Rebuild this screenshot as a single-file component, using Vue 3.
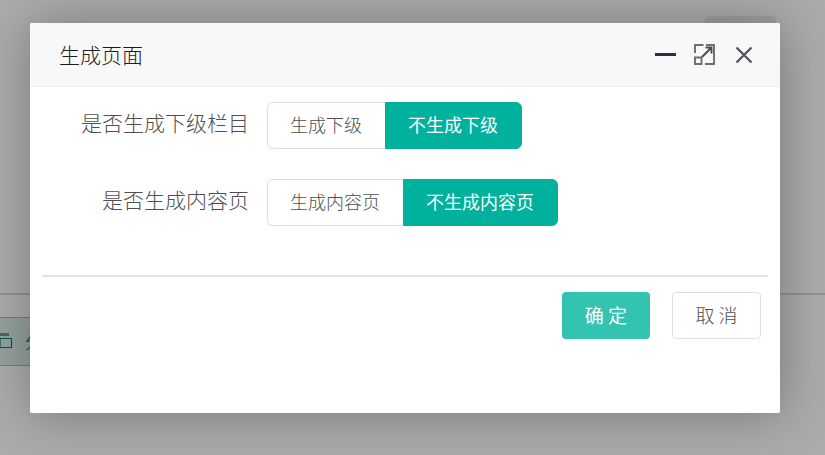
<template>
  <div class="page">
    <div class="back">
      <span class="back-btn"></span>
      <div class="back-rule"></div>
      <div class="back-tag">
        <svg width="14" height="18" viewBox="0 0 14 18" class="tag-icon">
          <path d="M0 6.500h11.500v9H0z" fill="none" stroke="#127f70" stroke-width="1.200" />
          <path d="M0 2.500h9" stroke="#7f918c" stroke-width="3" />
        </svg>
        <span class="tag-text">分</span>
      </div>
    </div>
    <div class="mask"></div>

    <div class="dialog">
      <div class="dialog-head">
        <span class="dialog-title">生成页面</span>
        <div class="dialog-tools">
          <span class="tool-min"></span>
          <svg class="tool-max" width="21" height="21" viewBox="0 0 21 21">
            <path d="M9.500 1H1v8M12 1h8v19h-9M1 20v-6.500h6.500V20z" fill="none" stroke="#6c6c76" stroke-width="1.900" />
            <path d="M8 13L17.500 3.500M11.500 3.500h6V9.500" fill="none" stroke="#484854" stroke-width="1.900" />
          </svg>
          <svg class="tool-close" width="18" height="18" viewBox="0 0 18 18">
            <path d="M1.500 1.500l15 15M16.500 1.500l-15 15" fill="none" stroke="#55555f" stroke-width="2.400" />
          </svg>
        </div>
      </div>
      <div class="dialog-body">
        <div v-for="row in rows" :key="row.label" class="form-row">
          <label class="form-label">{{ row.label }}</label>
          <div class="btn-group">
            <span class="opt" :class="{ active: row.value == 0 }">{{ row.options[0] }}</span>
            <span class="opt" :class="{ active: row.value == 1 }">{{ row.options[1] }}</span>
          </div>
        </div>
      </div>
      <div class="dialog-foot">
        <button class="btn btn-ok">确 定</button>
        <button class="btn btn-cancel">取 消</button>
      </div>
    </div>
  </div>
</template>

<script setup>
import { ref } from 'vue'

const rows = ref([
  { label: '是否生成下级栏目', options: ['生成下级', '不生成下级'], value: 1 },
  { label: '是否生成内容页', options: ['生成内容页', '不生成内容页'], value: 1 }
])
</script>

<style>
html, body { margin: 0; overflow: hidden; }
</style>

<style scoped>
.page {
  position: relative;
  width: 825px;
  height: 455px;
  overflow: hidden;
  font-family: "Noto Sans CJK SC", "Liberation Sans", sans-serif;
  background: #fff;
}
.back {
  position: absolute;
  inset: 0;
}
.back-btn {
  position: absolute;
  top: 16px;
  right: 49px;
  width: 71px;
  height: 40px;
  border-radius: 4px;
  background: #eee;
}
.back-rule {
  position: absolute;
  top: 293px;
  left: 0;
  right: 0;
  height: 2px;
  background: #d8d8e0;
}
.back-tag {
  position: absolute;
  top: 317px;
  left: -10px;
  width: 80px;
  height: 49px;
  box-sizing: border-box;
  border: 1px solid #7fd0c4;
  background: #dcf1ed;
}
.tag-icon { position: absolute; left: 9px; top: 14px; }
.tag-text { position: absolute; left: 34px; top: 11px; font-size: 16px; color: #009a85; }
.mask {
  position: absolute;
  inset: 0;
  background: rgba(0, 0, 0, 0.33);
}
.dialog {
  position: absolute;
  top: 23px;
  left: 30px;
  width: 750px;
  height: 390px;
  background: #fff;
  border-radius: 2px;
  box-shadow: 1px 1px 50px rgba(0, 0, 0, 0.3);
}
.dialog-head {
  height: 63px;
  border-bottom: 1px solid #eee;
  background: #f8f8f8;
  border-radius: 2px 2px 0 0;
  display: flex;
  align-items: center;
  justify-content: space-between;
  padding: 0 27px 0 29px;
}
.dialog-title {
  font-size: 21px;
  font-weight: 300;
  color: #1c1c1c;
  padding-bottom: 2px;
}
.dialog-tools {
  display: flex;
  align-items: center;
}
.tool-min {
  width: 21px;
  height: 3px;
  background: #2e2d3c;
  margin-right: 18px;
}
.tool-max { margin-right: 20px; }
.dialog-body {
  padding: 15px 0 1px;
  height: 172px;
  border-bottom: 2px solid #e2e2e2;
  margin: 0 12px;
}
.form-row {
  display: flex;
  margin-bottom: 30px;
}
.form-label {
  width: 207px;
  padding-right: 18px;
  text-align: right;
  font-size: 21px;
  font-weight: 300;
  line-height: 41px;
  color: #4f4f4f;
}
.btn-group {
  display: flex;
}
.opt {
  height: 47px;
  line-height: 43px;
  box-sizing: border-box;
  border: 1px solid #dedee6;
  font-size: 18px;
  font-weight: 300;
  color: #4f4f4f;
  background: #fff;
}
.opt:first-child {
  padding: 0 23px 0 22px;
  border-radius: 6px 0 0 6px;
  border-right: 0;
}
.opt:last-child {
  padding: 0 23px 0 22px;
  border-radius: 0 6px 6px 0;
}
.opt.active {
  background: #00b19d;
  border-color: #00b19d;
  color: #fff;
  font-weight: 400;
}
.dialog-foot {
  display: flex;
  justify-content: flex-end;
  gap: 22px;
  padding: 15px 19px 0 0;
}
.btn {
  height: 47px;
  border-radius: 4px;
  font-family: inherit;
  font-size: 19px;
  font-weight: 300;
  padding: 0 0 3px;
  box-sizing: border-box;
}
.btn-ok {
  width: 88px;
  background: #33c3b1;
  border: 0;
  color: #fff;
  font-weight: 400;
}
.btn-cancel {
  width: 89px;
  background: #fff;
  border: 1px solid #dedee6;
  color: #4f4f4f;
}
</style>
